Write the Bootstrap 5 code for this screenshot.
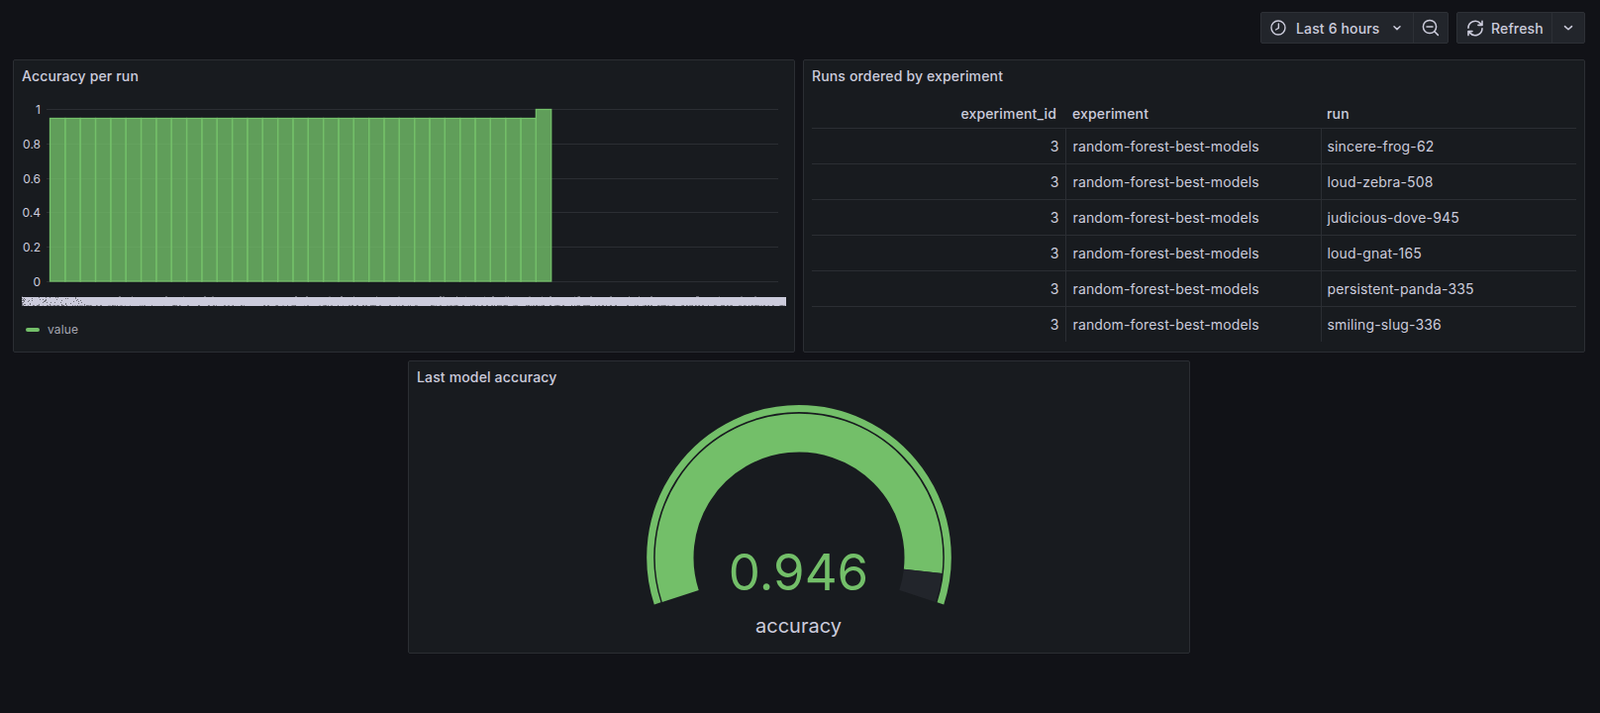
<!DOCTYPE html>
<html lang="en" data-bs-theme="dark">
<head>
<meta charset="utf-8">
<title>Dashboard</title>
<link href="https://cdn.jsdelivr.net/npm/bootstrap@5.3.0/dist/css/bootstrap.min.css" rel="stylesheet">
<style>
html,body{height:720px;overflow:hidden}
body{background:#111217;color:#ccccdc;font-family:Inter,"Liberation Sans",sans-serif;font-size:14px;letter-spacing:.15px}
.dash-wrap{padding:12px 15px 0 13px;width:1616px}
.tool-row{height:32px;margin-bottom:16px}
.tool-group{height:32px;background:#22252b;border:1px solid #2d3036;border-radius:2px;font-weight:500;color:#ccccdc}
.tool-cell{height:100%;padding:0 8px}
.tool-cell+.tool-cell{border-left:1px solid #2d3036}
.tool-cell svg{display:block;flex:none}
.time-main{width:153px;padding-left:9px}
.zoom-cell{width:35px;justify-content:center;padding:0}
.refresh-main{width:95px;padding-left:10px}
.caret-cell{width:33px;justify-content:center}
.label-time{margin-left:10px}
.label-refresh{margin-left:8px}
.caret-time{margin-right:3px}
.dash-panel{background:#181b1f;border:1px solid #2b2e33;border-radius:2px;width:790px;height:296px;overflow:hidden}
.panel-head{height:34px;padding:0 8px;font-weight:500;line-height:32px;white-space:nowrap}
.panel-gap{gap:8px}
.panel-row{margin-bottom:8px}
.chart-svg,.gauge-svg{display:block}
.chart-svg text{font-family:Inter,"Liberation Sans",sans-serif;font-size:12px;fill:#ccccdc;letter-spacing:0}
.gauge-svg text{font-family:Inter,"Liberation Sans",sans-serif;text-anchor:middle;letter-spacing:0}
.legend-row{padding-left:12px;font-size:12px;color:#a4a5b0;height:24px}
.legend-mark{width:14px;height:4px;border-radius:2px;background:#73bf69;margin-right:8px}
.table-box{padding:6px 8px 0}
.run-table{--bs-table-bg:transparent;--bs-table-color:#ccccdc;table-layout:fixed;width:772px;margin:0;font-size:14px}
.run-table th,.run-table td{height:36px;padding:0 7px;vertical-align:middle;border-bottom:1px solid #2b2e33;white-space:nowrap;color:#ccccdc}
.run-table th{height:28px;font-weight:500;padding-bottom:1px}
.run-table td+td{border-left:1px solid #2b2e33}
.run-table tr:last-child td{border-bottom:0;height:36px}
.run-table .num-th{padding-right:9px}
.run-table .num-td{padding-right:6px}
.run-table .run-col{padding-left:6px}
.gauge-panel{margin-left:399px}
</style>
</head>
<body>
<div class="dash-wrap">
  <div class="tool-row d-flex justify-content-end gap-2">
    <div class="tool-group d-flex align-items-center">
      <div class="tool-cell time-main d-flex align-items-center">
        <svg width="16" height="16" viewBox="0 0 16 16" fill="none" stroke="#ccccdc" stroke-width="1.4" stroke-linecap="round"><circle cx="8" cy="8" r="7"/><path d="M8.4 4v4.4L5.6 10"/></svg>
        <span class="label-time">Last 6 hours</span>
        <svg class="ms-auto caret-time" width="10" height="10" viewBox="0 0 10 10" fill="none" stroke="#ccccdc" stroke-width="1.5" stroke-linecap="round" stroke-linejoin="round"><path d="M2 3.8 5 6.6 8 3.8"/></svg>
      </div>
      <div class="tool-cell zoom-cell d-flex align-items-center">
        <svg width="18" height="18" viewBox="0 0 18 18" fill="none" stroke="#ccccdc" stroke-width="1.5" stroke-linecap="round"><circle cx="8" cy="8" r="6.6"/><path d="M5 8h6M12.8 12.8 16.4 16.4"/></svg>
      </div>
    </div>
    <div class="tool-group d-flex align-items-center">
      <div class="tool-cell refresh-main d-flex align-items-center">
        <svg width="16" height="17" viewBox="0 0 16 17" fill="none" stroke="#ccccdc" stroke-width="1.6" stroke-linecap="round" stroke-linejoin="round"><path d="M1 8.2A7 7 0 0 1 13.2 3.6L15 5.4M15 1.4v4h-4M15 8.8A7 7 0 0 1 2.8 13.4L1 11.6M1 15.6v-4h4"/></svg>
        <span class="label-refresh">Refresh</span>
      </div>
      <div class="tool-cell caret-cell d-flex align-items-center">
        <svg width="10" height="10" viewBox="0 0 10 10" fill="none" stroke="#ccccdc" stroke-width="1.5" stroke-linecap="round" stroke-linejoin="round"><path d="M1.5 3.6 5 6.8 8.5 3.6"/></svg>
      </div>
    </div>
  </div>

  <div class="panel-row d-flex panel-gap">
    <section class="dash-panel">
      <div class="panel-head">Accuracy per run</div>
      <svg class="chart-svg" id="chart" width="788" height="226" viewBox="14 95 788 226">
        <g stroke="#2b2e33" stroke-width="1">
          <path d="M47 110.5H786M47 145.5H786M47 180.5H786M47 214.5H786M47 249.5H786M47 284.5H786"/>
        </g>
        <g text-anchor="end">
          <text x="41" y="114.5">1</text>
          <text x="41" y="149.5">0.8</text>
          <text x="41" y="184.5">0.6</text>
          <text x="41" y="218.5">0.4</text>
          <text x="41" y="253.5">0.2</text>
          <text x="41" y="288.5">0</text>
        </g>
        <g id="bars" fill="#73bf69" fill-opacity=".8" stroke="#73bf69" stroke-width="1.3"></g>
        <rect x="22" y="300" width="772" height="9" fill="#ccccdc"/>
        <g id="specks" fill="#6f7079"></g>
      </svg>
      <div class="legend-row d-flex align-items-center"><span class="legend-mark"></span><span>value</span></div>
    </section>
    <section class="dash-panel">
      <div class="panel-head">Runs ordered by experiment</div>
      <div class="table-box">
        <table class="table table-borderless run-table">
          <colgroup><col style="width:256px"><col style="width:258px"><col style="width:258px"></colgroup>
          <thead><tr><th class="text-end num-th">experiment_id</th><th>experiment</th><th class="run-col">run</th></tr></thead>
          <tbody>
            <tr><td class="text-end num-td">3</td><td>random-forest-best-models</td><td class="run-col">sincere-frog-62</td></tr>
            <tr><td class="text-end num-td">3</td><td>random-forest-best-models</td><td class="run-col">loud-zebra-508</td></tr>
            <tr><td class="text-end num-td">3</td><td>random-forest-best-models</td><td class="run-col">judicious-dove-945</td></tr>
            <tr><td class="text-end num-td">3</td><td>random-forest-best-models</td><td class="run-col">loud-gnat-165</td></tr>
            <tr><td class="text-end num-td">3</td><td>random-forest-best-models</td><td class="run-col">persistent-panda-335</td></tr>
            <tr><td class="text-end num-td">3</td><td>random-forest-best-models</td><td class="run-col">smiling-slug-336</td></tr>
          </tbody>
        </table>
      </div>
    </section>
  </div>

  <section class="dash-panel gauge-panel">
    <div class="panel-head">Last model accuracy</div>
    <svg class="gauge-svg" width="788" height="260" viewBox="413 399 788 260">
      <path d="M664.1 609.4A150.3 150.3 0 1 1 949.9 609.4" fill="none" stroke="#73bf69" stroke-width="7"/>
      <path d="M687.26 601.9A125.9 125.9 0 1 1 932.14 576.81" fill="none" stroke="#73bf69" stroke-width="38.8"/>
      <path d="M932.14 576.81A125.9 125.9 0 0 1 926.74 601.9" fill="none" stroke="#22252b" stroke-width="38.8"/>
      <text x="806.5" y="596" font-size="51" fill="#73bf69">0.946</text>
      <text x="806.5" y="639" font-size="20" fill="#ccccdc">accuracy</text>
    </svg>
  </section>
</div>
<script>
(function(){
  var bars='',step=15.34,i,x,t,h;
  for(i=0;i<33;i++){
    x=50.5+i*step;
    t=i===32?110.5:119.5;
    h=284-t;
    bars+='<rect x="'+x.toFixed(2)+'" y="'+t+'" width="'+step.toFixed(2)+'" height="'+h+'"/>';
  }
  document.getElementById('bars').innerHTML=bars;
  var s='',seed=7;
  function r(){seed=(seed*16807)%2147483647;return seed/2147483647;}
  for(i=0;i<300;i++){
    x=22+Math.floor(r()*772);
    s+='<rect x="'+x+'" y="'+(r()<.85?308:299)+'" width="'+(1+Math.floor(r()*2))+'" height="1" fill-opacity="'+(.4+r()*.6).toFixed(2)+'"/>';
  }
  for(i=0;i<70;i++){
    x=22+Math.floor(Math.pow(r(),2)*70);
    s+='<rect x="'+x+'" y="'+(300+Math.floor(r()*9))+'" width="1" height="1"/>';
  }
  document.getElementById('specks').innerHTML=s;
})();
</script>
<script src="https://cdn.jsdelivr.net/npm/bootstrap@5.3.0/dist/js/bootstrap.bundle.min.js"></script>
</body>
</html>
